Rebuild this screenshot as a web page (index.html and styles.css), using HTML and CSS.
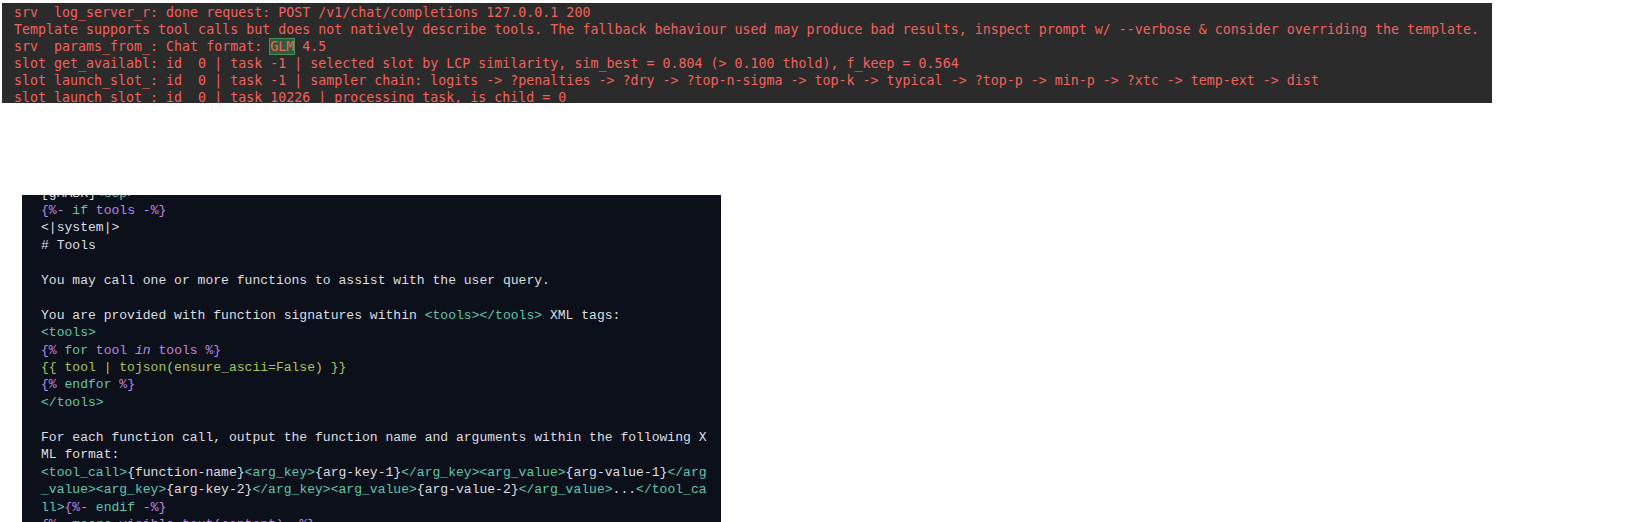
FILE: index.html
```html
<!DOCTYPE html>
<html>
<head>
<meta charset="utf-8">
<link rel="stylesheet" href="styles.css">
</head>
<body>
<div class="log">
<pre class="log-text">srv  log_server_r: done request: POST /v1/chat/completions 127.0.0.1 200
Template supports tool calls but does not natively describe tools. The fallback behaviour used may produce bad results, inspect prompt w/ --verbose &amp; consider overriding the template.
srv  params_from_: Chat format: <span class="hl">GLM</span> 4.5
slot get_availabl: id  0 | task -1 | selected slot by LCP similarity, sim_best = 0.804 (&gt; 0.100 thold), f_keep = 0.564
slot launch_slot_: id  0 | task -1 | sampler chain: logits -&gt; ?penalties -&gt; ?dry -&gt; ?top-n-sigma -&gt; top-k -&gt; typical -&gt; ?top-p -&gt; min-p -&gt; ?xtc -&gt; temp-ext -&gt; dist
slot launch_slot_: id  0 | task 10226 | processing task, is_child = 0</pre>
</div>
<div class="code">
<pre class="code-text">[gMASK]<span class="tag">&lt;sop&gt;</span>
<span class="jj">{%-</span> <span class="kw">if</span> <span class="jj">tools -%}</span>
&lt;|system|&gt;
# Tools

You may call one or more functions to assist with the user query.

You are provided with function signatures within <span class="tag">&lt;tools&gt;&lt;/tools&gt;</span> XML tags:
<span class="tag">&lt;tools&gt;</span>
<span class="jj">{%</span> <span class="kw">for</span> <span class="jj">tool <em>in</em> tools %}</span>
<span class="ex">{{ tool | tojson(ensure_ascii=False) }}</span>
<span class="jj">{%</span> <span class="kw">endfor</span> <span class="jj">%}</span>
<span class="tag">&lt;/tools&gt;</span>

For each function call, output the function name and arguments within the following X
ML format:
<span class="tag">&lt;tool_call&gt;</span>{function-name}<span class="tag">&lt;arg_key&gt;</span>{arg-key-1}<span class="tag">&lt;/arg_key&gt;&lt;arg_value&gt;</span>{arg-value-1}<span class="tag">&lt;/arg</span>
<span class="tag">_value&gt;&lt;arg_key&gt;</span>{arg-key-2}<span class="tag">&lt;/arg_key&gt;&lt;arg_value&gt;</span>{arg-value-2}<span class="tag">&lt;/arg_value&gt;</span>...<span class="tag">&lt;/tool_ca</span>
<span class="tag">ll&gt;</span><span class="jj">{%-</span> <span class="kw">endif</span> <span class="jj">-%}</span>
<span class="jj">{%-</span> <span class="kw">macro</span> <span class="jj">visible_text(content) -%}</span>
    <span class="jj">{%-</span> <span class="kw">if</span> <span class="jj">content is string -%}</span></pre>
</div>
</body>
</html>
```

FILE: styles.css
```css
html, body {
  margin: 0;
  padding: 0;
  background: #ffffff;
}

body {
  width: 1636px;
  height: 522px;
  overflow: hidden;
}

.log {
  margin: 3px 0 0 2px;
  width: 1490px;
  height: 100px;
  background: #2b2b2b;
  overflow: hidden;
}

.log-text {
  margin: 0;
  padding: 1px 0 0 12px;
  font-family: "DejaVu Sans Mono", "Liberation Mono", monospace;
  font-size: 13.3px;
  line-height: 17px;
  color: #f0625f;
  white-space: pre;
}

.hl {
  background: #2f5d3c;
  outline: 1px solid #4a8a58;
}

.code {
  margin: 92px 0 0 22px;
  width: 699px;
  height: 327px;
  background: #0c101a;
  overflow: hidden;
}

.code-text {
  margin: -10.5px 0 0 0;
  padding: 0 0 0 19px;
  font-family: "Liberation Mono", "DejaVu Sans Mono", monospace;
  font-size: 13.05px;
  line-height: 17.45px;
  color: #dcdee2;
  white-space: pre;
}

.jj {
  color: #c084e0;
}

.jj em {
  font-style: italic;
}

.kw {
  color: #5ec8ad;
}

.tag {
  color: #5ec8ad;
}

.ex {
  color: #a9c45a;
}
```
